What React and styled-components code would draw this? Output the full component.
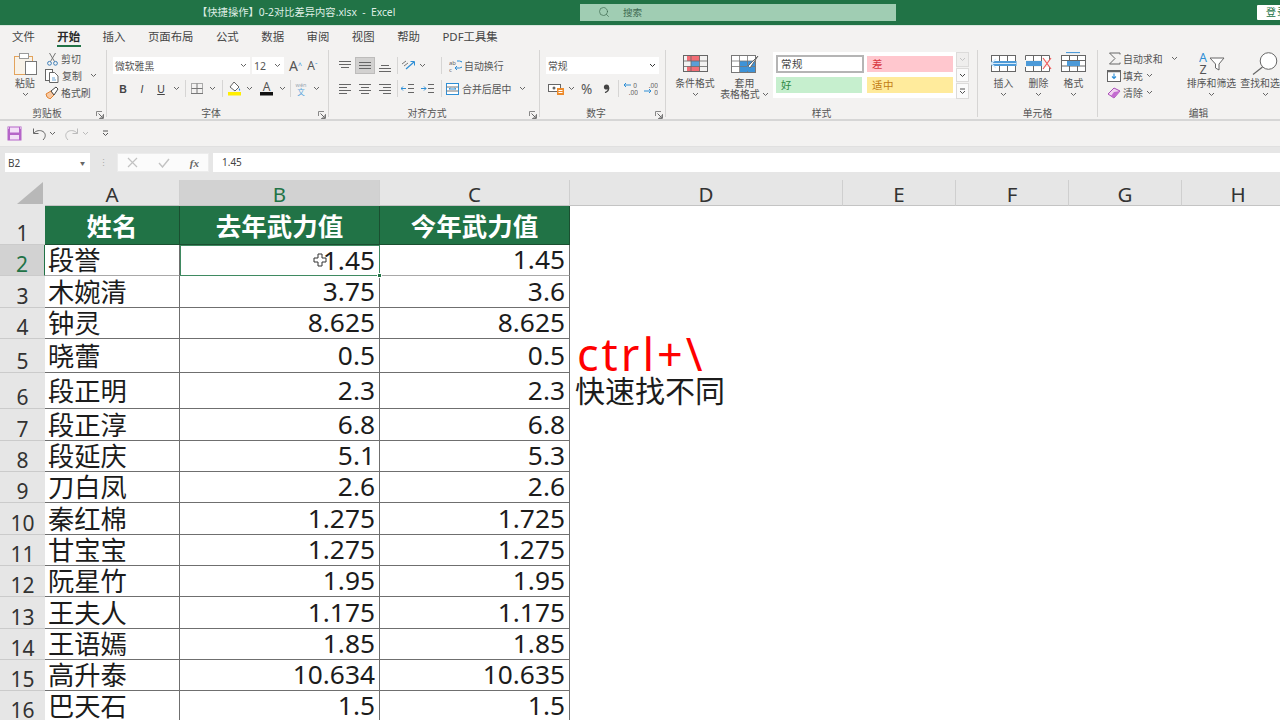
import React from "react";
import styled, { createGlobalStyle } from "styled-components";
import { Search } from "lucide-react";

const Global = createGlobalStyle`
  html, body { margin: 0; padding: 0; width: 1280px; height: 720px; overflow: hidden; background: #fff; }
  body { font-family: "Noto Sans", "Noto Sans CJK SC", sans-serif; color: #444; }
  #root { width: 1280px; height: 720px; overflow: hidden; }
  * { box-sizing: border-box; }
`;

const Page = styled.div`display: flex; flex-direction: column; width: 1280px; height: 720px; overflow: hidden;`;

/* ---------- title bar ---------- */
const TitleBar = styled.header`
  flex: 0 0 25px; display: grid; grid-template-columns: 197px 383px 316px 361px 23px; align-items: center;
  background: #217346; overflow: hidden;
`;
const DocTitle = styled.div`grid-column: 2; font-size: 10.3px; color: #dfeee5; white-space: pre; line-height: 23px; margin-top: -1px;`;
const SearchBox = styled.div`
  grid-column: 3; height: 17px; margin-top: -1px; background: #a0cdb3; display: flex; align-items: center; gap: 13px;
  padding-left: 18px; font-size: 9.6px; color: #3f6b52;
`;
const Login = styled.div`
  grid-column: 5; width: 40px; height: 15px; background: #fff; font-size: 10px; line-height: 15px; color: #217346;
  padding-left: 9px; border-radius: 1px; white-space: nowrap; letter-spacing: 1px;
`;

/* ---------- tabs ---------- */
const Tabs = styled.nav`flex: 0 0 23px; display: flex; gap: 22.5px; padding-left: 12px; background: #f3f2f1; border-top: 1px solid #d9e6de;`;
const Tab = styled.div`
  position: relative; font-size: 11.4px; line-height: 21px; white-space: nowrap; font-weight: ${p => (p.$active ? 700 : 400)};
  color: ${p => (p.$active ? "#2b2b2b" : "#454545")};
  ${p => p.$active && `&::after{content:"";position:absolute;left:0;right:-1px;bottom:1px;height:2px;background:#217346;}`}
`;

/* ---------- ribbon ---------- */
const Ribbon = styled.section`flex: 0 0 73px; display: flex; align-items: flex-start; padding-top: 2px; background: #f3f2f1; border-bottom: 2px solid #d6d6d6; overflow: hidden;`;
const Group = styled.div`
  position: relative; flex: 0 0 ${p => p.$w}px; min-width: 0; height: 67px; display: flex; flex-direction: column;
  ${p => !p.$last && "border-right: 1px solid #d6d5d4;"}
`;
const GroupBody = styled.div`
  flex: 0 0 56px; display: flex; padding-left: ${p => p.$pl || 0}px; padding-top: ${p => p.$pt || 0}px;
  flex-direction: ${p => (p.$col ? "column" : "row")}; gap: ${p => p.$gap || 0}px;
`;
const GroupLabel = styled.div`height: 11px; font-size: 9.8px; line-height: 16px; text-align: center; color: #555; white-space: nowrap; padding-right: ${p => p.$pr || 0}px;`;
const Launcher = styled.svg`position: absolute; right: 2px; bottom: -2px; width: 8px; height: 8px;`;

const ToolRow = styled.div`display: flex; align-items: center; height: 17px;`;
const Slot = styled.div`
  flex: 0 0 ${p => p.$w}px; height: 17px; margin-left: ${p => p.$ml || 0}px; display: flex; align-items: center; justify-content: center;
  ${p => p.$on && "background:#d2d1d0; border:1px solid #bdbcbb;"}
`;
const Divider = styled.div`flex: 0 0 ${p => p.$w}px; height: 17px; position: relative; &::after{content:"";position:absolute;left:50%;top:0;bottom:0;width:1px;background:#d6d5d4;}`;
const Select = styled.div`
  flex: 0 0 ${p => p.$w}px; height: 17px; margin-right: ${p => p.$mr || 0}px; background: #fff; display: flex; align-items: center; justify-content: space-between;
  padding: 0 3px 0 2px; font-size: 9.8px; color: #555;
`;
const TextBtn = styled.div`
  display: flex; align-items: center; gap: ${p => p.$gap ?? 3}px; height: 17px; font-size: 9.9px; color: #555; white-space: nowrap;
  flex: 0 0 auto; margin-left: ${p => p.$ml || 0}px;
`;
const BoldGlyph = styled.span`font: ${p => p.$style || "700"} 10.5px "Liberation Sans", sans-serif; color: #444; ${p => p.$u && "text-decoration: underline;"}`;
const FontStep = styled.span`font: 400 ${p => p.$s}px "Noto Sans", sans-serif; color: #555; line-height: 17px;`;
const Caret = styled.sup`font-size: 7px; color: #2e8fd6; line-height: 0; vertical-align: 6px;`;

const LargeBtn = styled.div`
  flex: 0 0 ${p => p.$w}px; min-width: 0; display: flex; flex-direction: column; align-items: center; font-size: 9.9px; line-height: 11px; color: #555; white-space: nowrap;
  padding-top: ${p => p.$pt ?? 5}px;
`;
const LargeIcon = styled.div`height: ${p => p.$h || 20}px; display: flex; align-items: center; justify-content: center; margin-bottom: ${p => p.$mb ?? 4}px;`;
const LabelLine = styled.div`height: 11px; display: flex; align-items: center; gap: 2px;`;

const Gallery = styled.div`
  flex: 0 0 182px; height: 46px; margin-top: 2px; background: #fff; display: grid; grid-template-columns: 88px 86px; grid-template-rows: 18px 16px; gap: 4px 3px; padding: 3px;
`;
const StyleCell = styled.div`
  background: ${p => p.$bg}; color: ${p => p.$fg}; font-size: 10.5px; line-height: 16px; padding-left: ${p => (p.$sel ? 3 : 5)}px; letter-spacing: .6px;
  ${p => p.$sel && "border: 2px solid #b5b5b5; line-height: 14px;"}
  ${p => p.$short && "margin-right: 2px;"}
  ${p => p.$thin && "margin: 1px 0;"}
`;
const GalleryScroll = styled.div`flex: 0 0 13px; height: 46px; margin-top: 2px; display: grid; grid-template-rows: 15px 14px 16px; gap: 1px;`;
const ScrollBtn = styled.div`background: ${p => (p.$dim ? "#efeeed" : "#fbfbfb")}; border: 1px solid #dcdbda; display: flex; align-items: center; justify-content: center;`;
const ActionColumn = styled.div`flex: 0 0 ${p => p.$w}px; min-width: 0; padding-left: ${p => p.$pl || 0}px; display: flex; flex-direction: column;`;
const ActionRow = styled.div`display: flex; align-items: center; height: 17px; font-size: 9.9px; color: #555; white-space: nowrap;`;
const ActionText = styled.span`margin-left: 2px;`;
const ActionChev = styled.span`margin-left: ${p => p.$ml}px; display: flex;`;

/* ---------- quick access ---------- */
const QuickBar = styled.div`flex: 0 0 26px; display: flex; align-items: center; padding-left: 7px; background: #f3f2f1; border-bottom: 1px solid #e0e0e0;`;
const QuickSlot = styled.div`flex: 0 0 ${p => p.$w}px; display: flex; align-items: center;`;

/* ---------- formula bar ---------- */
const FormulaBar = styled.div`flex: 0 0 33px; display: flex; padding: 6px 0 0 5px; background: #e6e6e6;`;
const NameBox = styled.div`flex: 0 0 85px; height: 19px; background: #fff; font-size: 10px; line-height: 18px; color: #444; padding: 0 5px 0 3px; display: flex; justify-content: space-between; align-items: center;`;
const NameArrow = styled.span`font-size: 5px; color: #666;`;
const FormulaDots = styled.div`flex: 0 0 27px; height: 19px; display: flex; align-items: center; justify-content: center; color: #aaa; font-size: 9px;`;
const FormulaBtns = styled.div`flex: 0 0 92px; height: 19px; background: #fbfbfb; border: 1px solid #ececec; display: flex; align-items: center; justify-content: space-between; padding: 0 9px 0 9px;`;
const FxMark = styled.span`font: italic 700 11px "Liberation Serif", serif; color: #666;`;
const FormulaInput = styled.div`flex: 1; height: 19px; margin-left: 4px; background: #fff; font-size: 10px; line-height: 19px; color: #444; padding-left: 9px;`;

/* ---------- sheet ---------- */
const Sheet = styled.main`
  flex: 1; background: #fff; display: grid; overflow: hidden;
  grid-template-columns: 45px 135px 200px 190px 273px 113px 113px 113px 113px;
  grid-template-rows: 26px 39px 31px 32px 31px 34px 36px 32px 31px 31px 32px 31px 31px 32px 31px 31px 31px;
`;
const Corner = styled.div`
  background: #e6e6e6; padding: 2px 2px 2px 17px;
  &::after{content:"";display:block;width:26px;height:22px;background:#b8b8b8;clip-path:polygon(100% 0,100% 100%,0 100%);}
`;
const ColHead = styled.div`
  background: ${p => (p.$sel ? "#d2d2d2" : "#e6e6e6")}; color: ${p => (p.$sel ? "#217346" : "#333")};
  border-right: 1px solid #cfcfcf; border-bottom: 1px solid #c4c4c4;
  font-size: 20.5px; line-height: 29px; text-align: center;
`;
const RowHead = styled.div`
  background: ${p => (p.$sel ? "#d2d2d2" : "#e6e6e6")}; color: ${p => (p.$sel ? "#217346" : "#333")};
  border-bottom: 1px solid #cbcbcb; ${p => p.$sel && "border-right: 1px solid #217346;"}
  font-size: 21px; line-height: 22px; display: flex; align-items: flex-end; justify-content: center;
`;
const HeaderCell = styled.div`
  background: #217346; color: #fff; font-size: 25.5px; font-weight: 700; display: flex; align-items: center; justify-content: center;
  border-right: 1px solid #1a4f30; border-bottom: 1px solid #1a4f30; padding-bottom: 1px;
`;
const DataCell = styled.div`
  position: relative; display: flex; align-items: center; white-space: nowrap; color: #1c1c1c; font-size: 26.3px; line-height: 30px;
  justify-content: ${p => (p.$num ? "flex-end" : "flex-start")}; padding: ${p => (p.$num ? "0 4px 2px 0" : "0 0 0 3px")};
  border-right: 1px solid #6f6f6f; border-bottom: 1px solid ${p => (p.$light ? "#a8a8a8" : "#6f6f6f")};
  ${p => p.$selected && "border: 1px solid #3f8a61;"}
`;
const FillHandle = styled.span`position: absolute; right: -3px; bottom: -3px; width: 5px; height: 5px; background: #217346; border: 1px solid #fff; z-index: 2;`;
const Cursor = styled.svg`position: absolute; left: 132px; top: 7px; width: 14px; height: 14px;`;
const NoteCell = styled.div`grid-column: 5 / -1; display: flex; align-items: flex-end; white-space: nowrap; line-height: 1;`;
const HeaderRest = styled.div`grid-column: 5 / -1;`;
const Shortcut = styled.span`font: 400 45px "Noto Sans", sans-serif; letter-spacing: 3px; color: #f00; line-height: 40px; margin: 0 0 -1px 7px;`;
const Remark = styled.span`font-size: 30px; color: #1c1c1c; line-height: 36px; margin: 0 0 0 5px;`;
const Percent = styled.span`font-size: 13.5px; color: #555;`;
const SizeText = styled.span`font-size: 10.5px;`;

/* ---------- drawings ---------- */
const Svg = ({ w, h, children, ...r }) => <svg width={w} height={h} viewBox={`0 0 ${w} ${h}`} fill="none" {...r}>{children}</svg>;
const Chev = ({ c = "#666" }) => <Svg w={7} h={5}><path d="M1 1l2.500 2.500L6 1" stroke={c} strokeWidth="1" /></Svg>;
const Lines = ({ rows, c = "#666" }) => (
  <Svg w={14} h={13}>{rows.map(([a, b, y], i) => <path key={i} d={`M${a} ${y}.5H${b}`} stroke={c} />)}</Svg>
);
const PasteIcon = () => (
  <Svg w={25} h={23}>
    <rect x="1.500" y="4.500" width="18" height="18" fill="#f8f2e8" stroke="#e3a35c" />
    <rect x="6.500" y="1.500" width="9" height="5" fill="#fff" stroke="#9a9a9a" />
    <rect x="12.500" y="9.500" width="11" height="13" fill="#fff" stroke="#777" />
  </Svg>
);
const ScissorsIcon = () => (
  <Svg w={11} h={14}>
    <path d="M2.500 1l5 8.500M8.500 1l-5 8.500" stroke="#777" />
    <circle cx="2.500" cy="11.300" r="1.900" stroke="#3f7fb8" />
    <circle cx="8.500" cy="11.300" r="1.900" stroke="#3f7fb8" />
  </Svg>
);
const CopyIcon = () => (
  <Svg w={15} h={14}>
    <rect x=".5" y=".5" width="7" height="11" fill="#fff" stroke="#666" />
    <path d="M4.500 3.500h5l3.500 3.500v6.500H4.500z" fill="#fff" stroke="#666" />
    <path d="M7 9h3M7 11h4" stroke="#6aa6d8" />
  </Svg>
);
const BrushIcon = () => (
  <Svg w={14} h={13}>
    <path d="M1 8l5-3 3 4-4 4-3-2z" fill="#f7c9a3" stroke="#e0812f" />
    <path d="M6 5l5-4 2 2-4 6z" fill="#fff" stroke="#444" />
  </Svg>
);
const BorderIcon = () => (
  <Svg w={14} h={13}><rect x="1.500" y="1.500" width="11" height="10" stroke="#aaa" /><path d="M7 1.500v10M1.500 6.500h11" stroke="#777" /><path d="M1 11.500h12" stroke="#777" /></Svg>
);
const FillIcon = () => (
  <Svg w={15} h={15}>
    <path d="M7 1l5 5-4 4-5-4z" fill="#fff" stroke="#666" />
    <path d="M12 7c1 1 1.500 2 1 2.500s-1.500 0-1-2.500z" fill="#2e8fd6" />
    <rect x="1" y="11" width="13" height="3.500" fill="#ffee00" />
  </Svg>
);
const FontColorIcon = () => (
  <svg width="15" height="15" viewBox="0 0 15 15"><text x="7.500" y="10" textAnchor="middle" fontSize="12" fill="#555" fontFamily="Noto Sans">A</text><rect x="1" y="11" width="13" height="3.500" fill="#111" /></svg>
);
const WenIcon = () => (
  <Svg w={14} h={15}>
    <text x="7" y="5.500" textAnchor="middle" fontSize="5.500" fill="#9aa7b2" fontFamily="Noto Sans">wén</text>
    <text x="7" y="13.500" textAnchor="middle" fontSize="7.500" fill="#5aa5dc" fontFamily="Noto Sans CJK SC">文</text>
  </Svg>
);
const OrientIcon = () => (
  <Svg w={15} h={13}><path d="M1 5l4-3M3 7l4-3" stroke="#777" /><path d="M5 10l8-7" stroke="#2e8fd6" strokeWidth="1.200" /><path d="M9.500 2.500h4v4" stroke="#2e8fd6" /></Svg>
);
const WrapIcon = () => (
  <Svg w={13} h={14}>
    <text x="0" y="6" fontSize="6" fill="#666" fontFamily="Noto Sans">ab</text>
    <text x="0" y="13" fontSize="6" fill="#666" fontFamily="Noto Sans">c</text>
    <path d="M8 2h2.500a2.500 2.500 0 0 1 0 7H6m2-2L6 9l2 2" stroke="#2e8fd6" />
  </Svg>
);
const IndentIcon = ({ inward }) => (
  <Svg w={14} h={11}>
    <path d="M7 1.500h6M7 5.500h6M7 9.500h6" stroke="#666" />
    <path d={inward ? "M0 5.500h5m-2-2l2 2-2 2" : "M5 5.500H0m2-2l-2 2 2 2"} stroke="#2e8fd6" />
  </Svg>
);
const MergeIcon = () => (
  <Svg w={13} h={12}><rect x=".5" y=".5" width="12" height="11" stroke="#2e8fd6" fill="#fff" /><path d="M.5 4h12M.5 8h12" stroke="#777" /><path d="M3 6h7M3 6l1.500-1M10 6L8.500 5" stroke="#2e8fd6" /></Svg>
);
const CurrencyIcon = () => (
  <Svg w={17} h={13}><rect x=".5" y="2.500" width="12" height="7" fill="#fff" stroke="#666" /><circle cx="6" cy="6" r="1.500" fill="#666" /><rect x="9" y="6" width="7" height="7" fill="#ed8b2c" /><path d="M10.500 8.500h4M10.500 10.500h4" stroke="#fff" /></Svg>
);
const CommaIcon = () => (
  <Svg w={7} h={9}><circle cx="3.500" cy="3" r="2.600" fill="#444" /><path d="M5.800 3.500C5.800 6 4.500 7.800 2 8.600" stroke="#444" strokeWidth="1.300" /></Svg>
);
const DecIcon = ({ more }) => (
  <Svg w={14} h={13}>
    <text x={more ? 14 : 13} y="5.500" textAnchor="end" fontSize="6.500" fill="#666" fontFamily="Noto Sans">{more ? ".00" : "0"}</text>
    <text x="14" y="12.500" textAnchor="end" fontSize="6.500" fill="#666" fontFamily="Noto Sans">{more ? "0" : ".00"}</text>
    <path d={more ? "M0 9h7M5 7l2 2-2 2" : "M7 3H0M2 1L0 3l2 2"} stroke="#2e8fd6" />
  </Svg>
);
const CondIcon = () => (
  <Svg w={25} h={17}>
    <rect x="4" y="1" width="13" height="5" fill="#f26d75" />
    <rect x="8" y="6" width="8" height="5.500" fill="#5a9fd6" />
    <rect x="4" y="11.500" width="13" height="5" fill="#f26d75" />
    <rect x=".5" y=".5" width="24" height="16" stroke="#666" />
    <path d="M.5 6h24M.5 11.500h24M8 .5v16M16.500 .5v16" stroke="#666" opacity=".8" />
  </Svg>
);
const TableStyleIcon = () => (
  <Svg w={28} h={20}>
    <rect x=".5" y="1.500" width="24" height="17" fill="#fff" stroke="#777" />
    <rect x="9" y="7" width="15" height="11" fill="#3d93d8" />
    <path d="M.5 7h24M.5 12.500h24M8.500 1.500v17M16.500 1.500v17" stroke="#777" opacity=".8" />
    <path d="M27 2L17 12l2 2z" fill="#fff" stroke="#666" />
    <path d="M17 12c-2 1-2 4-5 5 3 1 7 0 7-3z" fill="#3d93d8" />
  </Svg>
);
const InsertIcon = () => (
  <Svg w={27} h={17}>
    <rect x="1.500" y=".5" width="24" height="16" fill="#fff" stroke="#666" />
    <path d="M9.500 .5v16M17.500 .5v16" stroke="#666" />
    <rect x="1.500" y="6" width="25" height="5" fill="#4d9ad8" />
    <path d="M1 8.500h25M1 8.500L6 4M1 8.500L6 13" stroke="#d7ebfa" strokeWidth="1.200" />
  </Svg>
);
const DeleteIcon = () => (
  <Svg w={27} h={17}>
    <path d="M.5 5V.5h24V5M.5 12v4.500h24V12" stroke="#666" fill="#fff" />
    <path d="M8.500 .5v16M16.500 .5v16" stroke="#666" />
    <rect x="1" y="6" width="16" height="5" fill="#4d9ad8" />
    <path d="M18 3l8 11M26 3L18 14" stroke="#ef5c5c" strokeWidth="1.200" />
  </Svg>
);
const FormatIcon = () => (
  <Svg w={25} h={20}>
    <path d="M5 .5h14" stroke="#4d9ad8" strokeWidth="1.200" />
    <rect x=".5" y="3.500" width="24" height="16" fill="#fff" stroke="#666" />
    <path d="M.5 8.500h24M.5 14h24M8.500 3.500v16M16.500 3.500v16" stroke="#666" />
    <rect x="6" y="9" width="13" height="5" fill="#4d9ad8" />
  </Svg>
);
const SumIcon = () => <Svg w={13} h={13}><path d="M12 2.500V1H1.500L7 6.500 1.500 12H12v-1.500" stroke="#666" /></Svg>;
const FillDownIcon = () => (
  <Svg w={14} h={12}><rect x=".5" y=".5" width="13" height="11" fill="#fff" stroke="#666" /><path d="M.5 1.500h13" stroke="#666" strokeWidth="1.500" /><path d="M7 3.500v5M5 6.500l2 2 2-2" stroke="#2e8fd6" strokeWidth="1.100" /></Svg>
);
const EraserIcon = () => (
  <Svg w={14} h={12}><path d="M1 7l6-6 6 3-6 7z" fill="#f0d4f0" stroke="#a94cb8" /><path d="M4 9l3-4 6-1-6 7z" fill="#c36bd0" /></Svg>
);
const SortIcon = () => (
  <Svg w={26} h={22}>
    <text x="0" y="10" fontSize="12.500" fill="#2e8fd6" fontFamily="Noto Sans">A</text>
    <text x="0.500" y="21.500" fontSize="12.500" fill="#555" fontFamily="Noto Sans">Z</text>
    <path d="M11 6h14l-5 6v6l-3.500-2v-4z" stroke="#666" fill="#fff" />
  </Svg>
);
const FindIcon = () => (
  <Svg w={27} h={23}><circle cx="16.500" cy="9" r="8.300" stroke="#666" fill="#fff" /><path d="M10.500 15L1 22.500" stroke="#666" strokeWidth="1.200" /></Svg>
);
const SaveIcon = () => (
  <Svg w={15} h={15}><path d="M.5 .5h14v14H.5z" fill="#b565c8" /><rect x="3" y="1.500" width="9" height="5" fill="#f3dff7" /><rect x="3" y="9" width="9" height="4.500" fill="#f3dff7" /><path d="M1 1.500h1v1H1zM13 1.500h1v1h-1z" fill="#fff" /></Svg>
);
const Undo = ({ c, flip }) => (
  <Svg w={15} h={14} style={flip ? { transform: "scaleX(-1)" } : undefined}><path d="M1.500 1.500v5h5" stroke={c} /><path d="M1.800 6.200C4 3.500 8 2.800 11 4.500c3 2 3 5.500 0 8.500" stroke={c} /></Svg>
);
const Cross = () => <Svg w={11} h={11}><path d="M1 1l9 9M10 1l-9 9" stroke="#c2c2c2" strokeWidth="1.200" /></Svg>;
const Check = () => <Svg w={12} h={10}><path d="M1 5l3.500 4L11 1" stroke="#c2c2c2" strokeWidth="1.400" /></Svg>;
const MoreIcon = () => <Svg w={7} h={7}><path d="M1 1h5M1 3l2.500 2.500L6 3" stroke="#555" /></Svg>;
const Launch = () => (
  <Launcher viewBox="0 0 8 8" fill="none"><path d="M.5 5V.5H6M7.500 3v4.500H3" stroke="#888" /><path d="M2.500 2.500l4 4M7 4v3H4" stroke="#666" /></Launcher>
);

/* ---------- data ---------- */
const data = [
  ["段誉", "1.45", "1.45"], ["木婉清", "3.75", "3.6"], ["钟灵", "8.625", "8.625"], ["晓蕾", "0.5", "0.5"],
  ["段正明", "2.3", "2.3"], ["段正淳", "6.8", "6.8"], ["段延庆", "5.1", "5.3"], ["刀白凤", "2.6", "2.6"],
  ["秦红棉", "1.275", "1.725"], ["甘宝宝", "1.275", "1.275"], ["阮星竹", "1.95", "1.95"], ["王夫人", "1.175", "1.175"],
  ["王语嫣", "1.85", "1.85"], ["高升泰", "10.634", "10.635"], ["巴天石", "1.5", "1.5"],
];
const notes = { 3: <Shortcut>ctrl+\</Shortcut>, 4: <Remark>快速找不同</Remark> };

export default function App() {
  return (
    <Page>
      <Global />
      <TitleBar>
        <DocTitle>{"【快捷操作】0-2对比差异内容.xlsx  -  Excel"}</DocTitle>
        <SearchBox><Search size={12} strokeWidth={1.4} color="#3f6b52" />搜索</SearchBox>
        <Login>登录</Login>
      </TitleBar>

      <Tabs>
        {["文件", "开始", "插入", "页面布局", "公式", "数据", "审阅", "视图", "帮助", "PDF工具集"].map(t => (
          <Tab key={t} $active={t === "开始"}>{t}</Tab>
        ))}
      </Tabs>

      <Ribbon>
        <Group $w={107}>
          <GroupBody $pl={8}>
            <LargeBtn $w={34} $pt={2}>
              <LargeIcon $h={23} $mb={3}><PasteIcon /></LargeIcon>
              <LabelLine>粘贴</LabelLine>
              <LabelLine><Chev /></LabelLine>
            </LargeBtn>
            <ActionColumn $w={64} $pl={3}>
              <ActionRow><Slot $w={14}><ScissorsIcon /></Slot><ActionText>剪切</ActionText></ActionRow>
              <ActionRow><Slot $w={14}><CopyIcon /></Slot><ActionText>复制</ActionText><ActionChev $ml={8}><Chev /></ActionChev></ActionRow>
              <ActionRow><Slot $w={14}><BrushIcon /></Slot><ActionText>格式刷</ActionText></ActionRow>
            </ActionColumn>
          </GroupBody>
          <GroupLabel $pr={12}>剪贴板</GroupLabel>
          <Launch />
        </Group>

        <Group $w={222}>
          <GroupBody $col $pl={6} $pt={7} $gap={6}>
            <ToolRow>
              <Select $w={137} $mr={2}><span>微软雅黑</span><Chev /></Select>
              <Select $w={32} $mr={3}><SizeText>12</SizeText><Chev /></Select>
              <Slot $w={17}><FontStep $s={14}>A</FontStep><Caret>^</Caret></Slot>
              <Slot $w={17}><FontStep $s={12}>A</FontStep><Caret>ˇ</Caret></Slot>
            </ToolRow>
            <ToolRow>
              <Slot $w={20}><BoldGlyph>B</BoldGlyph></Slot>
              <Slot $w={18}><BoldGlyph $style="italic 400">I</BoldGlyph></Slot>
              <Slot $w={20}><BoldGlyph $style="400" $u>U</BoldGlyph></Slot>
              <Slot $w={10}><Chev /></Slot>
              <Divider $w={8} />
              <Slot $w={16}><BorderIcon /></Slot>
              <Slot $w={14}><Chev /></Slot>
              <Divider $w={6} />
              <Slot $w={18}><FillIcon /></Slot>
              <Slot $w={12}><Chev /></Slot>
              <Slot $w={22}><FontColorIcon /></Slot>
              <Slot $w={10}><Chev /></Slot>
              <Divider $w={6} />
              <Slot $w={16}><WenIcon /></Slot>
              <Slot $w={14}><Chev /></Slot>
            </ToolRow>
          </GroupBody>
          <GroupLabel $pr={13}>字体</GroupLabel>
          <Launch />
        </Group>

        <Group $w={211}>
          <GroupBody $col $pl={6} $pt={7} $gap={6}>
            <ToolRow>
              <Slot $w={20}><Lines rows={[[1, 13, 2], [1, 13, 5], [3, 11, 8]]} /></Slot>
              <Slot $w={20} $on><Lines rows={[[1, 13, 3], [1, 13, 6], [1, 13, 9]]} /></Slot>
              <Slot $w={20}><Lines rows={[[3, 11, 6], [1, 13, 9], [1, 13, 12]]} /></Slot>
              <Divider $w={4} />
              <Slot $w={18}><OrientIcon /></Slot>
              <Slot $w={10}><Chev /></Slot>
              <Divider $w={28} />
              <TextBtn $gap={2} $ml={-6}><WrapIcon />自动换行</TextBtn>
            </ToolRow>
            <ToolRow>
              <Slot $w={20}><Lines rows={[[1, 13, 2], [1, 9, 5], [1, 13, 8], [1, 9, 11]]} /></Slot>
              <Slot $w={20}><Lines rows={[[1, 13, 2], [3, 11, 5], [1, 13, 8], [3, 11, 11]]} /></Slot>
              <Slot $w={20}><Lines rows={[[1, 13, 2], [5, 13, 5], [1, 13, 8], [5, 13, 11]]} /></Slot>
              <Divider $w={4} />
              <Slot $w={18}><IndentIcon /></Slot>
              <Slot $w={22}><IndentIcon inward /></Slot>
              <Divider $w={4} />
              <Slot $w={15} $ml={2}><MergeIcon /></Slot>
              <TextBtn $gap={8} $ml={2}>合并后居中 <Chev /></TextBtn>
            </ToolRow>
          </GroupBody>
          <GroupLabel $pr={14}>对齐方式</GroupLabel>
          <Launch />
        </Group>

        <Group $w={126}>
          <GroupBody $col $pl={6} $pt={7} $gap={6}>
            <ToolRow><Select $w={113}><span>常规</span><Chev c="#333" /></Select></ToolRow>
            <ToolRow>
              <Slot $w={20}><CurrencyIcon /></Slot>
              <Slot $w={10}><Chev /></Slot>
              <Slot $w={21}><Percent>%</Percent></Slot>
              <Slot $w={18}><CommaIcon /></Slot>
              <Divider $w={6} />
              <Slot $w={20}><DecIcon /></Slot>
              <Slot $w={20}><DecIcon more /></Slot>
            </ToolRow>
          </GroupBody>
          <GroupLabel $pr={13}>数字</GroupLabel>
          <Launch />
        </Group>

        <Group $w={312}>
          <GroupBody $pl={8}>
            <LargeBtn $w={42} $pt={5}>
              <LargeIcon $h={17} $mb={6}><CondIcon /></LargeIcon>
              <LabelLine>条件格式</LabelLine>
              <LabelLine><Chev /></LabelLine>
            </LargeBtn>
            <LargeBtn $w={57} $pt={4}>
              <LargeIcon $h={20} $mb={4}><TableStyleIcon /></LargeIcon>
              <LabelLine>套用</LabelLine>
              <LabelLine>表格格式<Chev /></LabelLine>
            </LargeBtn>
            <Gallery>
              <StyleCell $sel $bg="#fff" $fg="#444">常规</StyleCell>
              <StyleCell $thin $bg="#ffc7ce" $fg="#d8383f">差</StyleCell>
              <StyleCell $short $bg="#c6efce" $fg="#2f8a45">好</StyleCell>
              <StyleCell $bg="#ffeb9c" $fg="#c27c14">适中</StyleCell>
            </Gallery>
            <GalleryScroll>
              <ScrollBtn $dim><Chev c="#c4c4c4" /></ScrollBtn>
              <ScrollBtn><Chev c="#444" /></ScrollBtn>
              <ScrollBtn><MoreIcon /></ScrollBtn>
            </GalleryScroll>
          </GroupBody>
          <GroupLabel>样式</GroupLabel>
        </Group>

        <Group $w={120}>
          <GroupBody $pl={8}>
            {[["插入", <InsertIcon />], ["删除", <DeleteIcon />], ["格式", <FormatIcon />]].map(([t, ic], i) => (
              <LargeBtn $w={35} $pt={i === 2 ? 2 : 5} key={t}>
                <LargeIcon $h={i === 2 ? 20 : 17} $mb={6}>{ic}</LargeIcon>
                <LabelLine>{t}</LabelLine>
                <LabelLine><Chev /></LabelLine>
              </LargeBtn>
            ))}
          </GroupBody>
          <GroupLabel>单元格</GroupLabel>
        </Group>

        <Group $w={201} $last>
          <GroupBody $pl={9}>
            <ActionColumn $w={78}>
              <ActionRow><Slot $w={14}><SumIcon /></Slot><ActionText>自动求和</ActionText><ActionChev $ml={8}><Chev /></ActionChev></ActionRow>
              <ActionRow><Slot $w={14}><FillDownIcon /></Slot><ActionText>填充</ActionText><ActionChev $ml={3}><Chev /></ActionChev></ActionRow>
              <ActionRow><Slot $w={14}><EraserIcon /></Slot><ActionText>清除</ActionText><ActionChev $ml={3}><Chev /></ActionChev></ActionRow>
            </ActionColumn>
            <LargeBtn $w={53} $pt={2}>
              <LargeIcon $h={22} $mb={4}><SortIcon /></LargeIcon>
              <LabelLine>排序和筛选</LabelLine>
              <LabelLine><Chev /></LabelLine>
            </LargeBtn>
            <LargeBtn $w={54} $pt={2}>
              <LargeIcon $h={22} $mb={4}><FindIcon /></LargeIcon>
              <LabelLine>查找和选择</LabelLine>
              <LabelLine><Chev /></LabelLine>
            </LargeBtn>
          </GroupBody>
          <GroupLabel>编辑</GroupLabel>
        </Group>
      </Ribbon>

      <QuickBar>
        <QuickSlot $w={25}><SaveIcon /></QuickSlot>
        <QuickSlot $w={17}><Undo c="#666" /></QuickSlot>
        <QuickSlot $w={15}><Chev /></QuickSlot>
        <QuickSlot $w={18}><Undo c="#bbb" flip /></QuickSlot>
        <QuickSlot $w={20}><Chev c="#bbb" /></QuickSlot>
        <QuickSlot $w={10}><MoreIcon /></QuickSlot>
      </QuickBar>

      <FormulaBar>
        <NameBox><span>B2</span><NameArrow>▼</NameArrow></NameBox>
        <FormulaDots>⋮</FormulaDots>
        <FormulaBtns><Cross /><Check /><FxMark>fx</FxMark></FormulaBtns>
        <FormulaInput>1.45</FormulaInput>
      </FormulaBar>

      <Sheet>
        <Corner />
        {["A", "B", "C", "D", "E", "F", "G", "H"].map(c => <ColHead key={c} $sel={c === "B"}>{c}</ColHead>)}

        <RowHead>1</RowHead>
        <HeaderCell>姓名</HeaderCell>
        <HeaderCell>去年武力值</HeaderCell>
        <HeaderCell>今年武力值</HeaderCell>
        <HeaderRest />

        {data.map(([n, b, c], i) => (
          <React.Fragment key={n}>
            <RowHead $sel={i === 0}>{i + 2}</RowHead>
            <DataCell $light={i === 0}>{n}</DataCell>
            <DataCell $num $selected={i === 0}>
              {b}
              {i === 0 && <>
                <Cursor viewBox="0 0 14 14"><path d="M5 1h4v4h4v4H9v4H5V9H1V5h4z" fill="#fff" stroke="#333" /></Cursor>
                <FillHandle />
              </>}
            </DataCell>
            <DataCell $num $light={i === 0}>{c}</DataCell>
            <NoteCell>{notes[i]}</NoteCell>
          </React.Fragment>
        ))}
      </Sheet>
    </Page>
  );
}
